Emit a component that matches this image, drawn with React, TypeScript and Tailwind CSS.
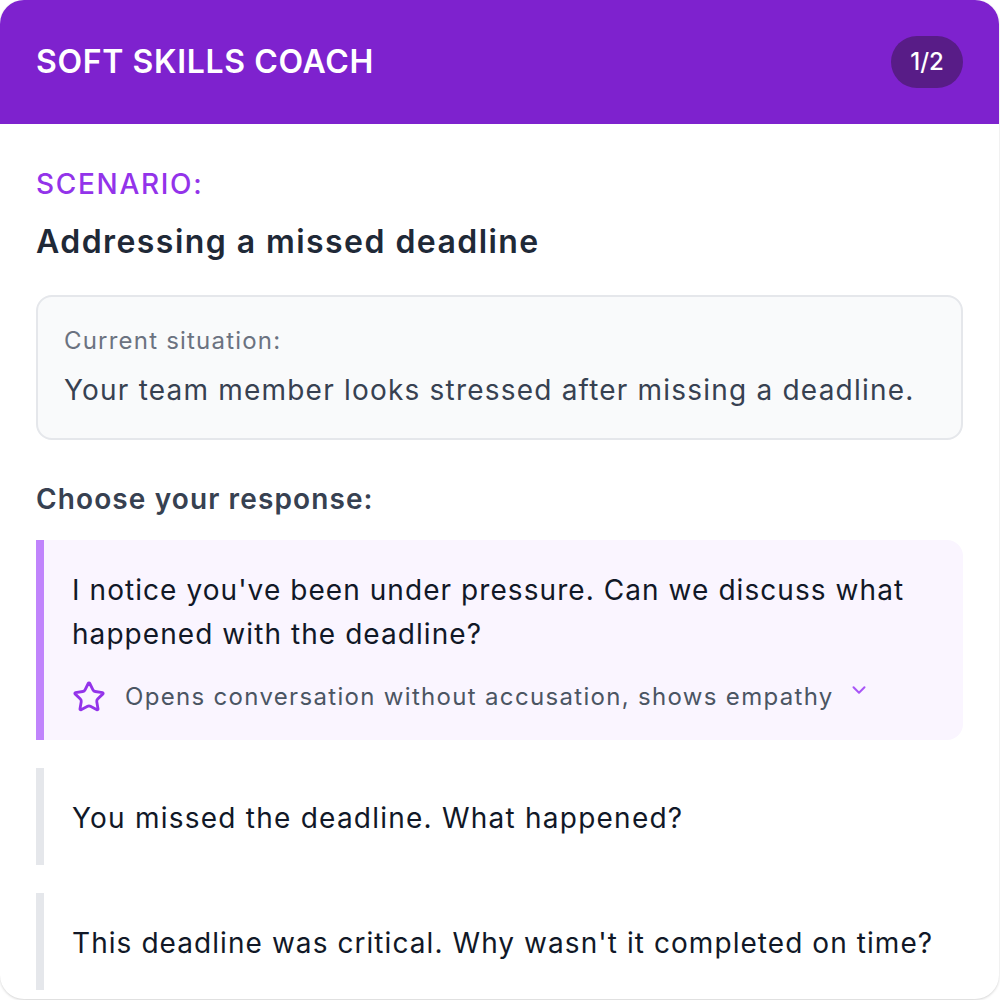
import React from "react";
import { Star, ChevronDown } from "lucide-react";

const font = { fontFamily: "Inter, 'Noto Sans', sans-serif" };

export default function App() {
  return (
    <div className="w-[1000px] h-[1000px] bg-white" style={font}>
      <div className="w-[999px] h-[999px] rounded-[24px] overflow-hidden bg-white shadow-[0_1px_3px_rgba(0,0,0,0.12),0_1px_2px_rgba(0,0,0,0.06)] flex flex-col">
        <div className="h-[124px] shrink-0 bg-[#7e22ce] px-[36px] flex items-center justify-between">
          <h1 className="text-white text-[32px] leading-[40px] font-semibold tracking-[0.02em]">
            SOFT SKILLS COACH
          </h1>
          <div className="w-[72px] h-[52px] rounded-full bg-[#581c87] flex items-center justify-center text-white text-[24px] font-medium">
            1/2
          </div>
        </div>
        <div className="px-[36px] pt-[42px] flex flex-col">
          <div className="text-[#9333ea] text-[28px] leading-[36px] font-medium tracking-[0.06em]">SCENARIO:</div>
          <h2 className="mt-[20px] text-[#1f2937] text-[32px] leading-[40px] font-semibold tracking-[0.045em]">
            Addressing a missed deadline
          </h2>
          <div className="mt-[33px] rounded-[16px] border-2 border-[#e5e7eb] bg-[#f9fafb] px-[26px] pt-[28px] pb-[28px]">
            <div className="text-[#6b7280] text-[24px] leading-[32px] tracking-[0.05em]">Current situation:</div>
            <div className="mt-[13px] text-[#374151] text-[28px] leading-[40px] tracking-[0.043em]">
              Your team member looks stressed after missing a deadline.
            </div>
          </div>
          <div className="mt-[39px] text-[#374151] text-[28px] leading-[40px] font-semibold tracking-[0.04em]">
            Choose your response:
          </div>
          <div className="mt-[21px] flex flex-col gap-[28px]">
            <div className="border-l-[8px] border-[#c084fc] bg-[#faf5ff] rounded-r-[16px] pl-[28px] pr-[28px] pt-[28px] pb-[27px]">
              <div className="text-[#111827] text-[28px] leading-[44px] tracking-[0.038em]">
                I notice you've been under pressure. Can we discuss what happened with the deadline?
              </div>
              <div className="mt-[25px] flex items-center h-[32px]">
                <Star className="w-[34px] h-[34px] text-[#9333ea] shrink-0" strokeWidth={2} />
                <span className="ml-[19px] text-[#4b5563] text-[24px] leading-[32px] tracking-[0.055em]">
                  Opens conversation without accusation, shows empathy
                </span>
                <ChevronDown className="ml-[14px] -mt-[14px] w-[22px] h-[22px] text-[#a855f7] shrink-0" strokeWidth={2.2} />
              </div>
            </div>
            <div className="border-l-[8px] border-[#e5e7eb] bg-white pl-[28px] pr-[16px] pt-[28px] pb-[25px]">
              <div className="text-[#111827] text-[28px] leading-[44px] tracking-[0.044em]">
                You missed the deadline. What happened?
              </div>
            </div>
            <div className="border-l-[8px] border-[#e5e7eb] bg-white pl-[28px] pr-[16px] pt-[28px] pb-[25px]">
              <div className="text-[#111827] text-[28px] leading-[44px] tracking-[0.038em] whitespace-nowrap">
                This deadline was critical. Why wasn't it completed on time?
              </div>
            </div>
          </div>
        </div>
      </div>
    </div>
  );
}
